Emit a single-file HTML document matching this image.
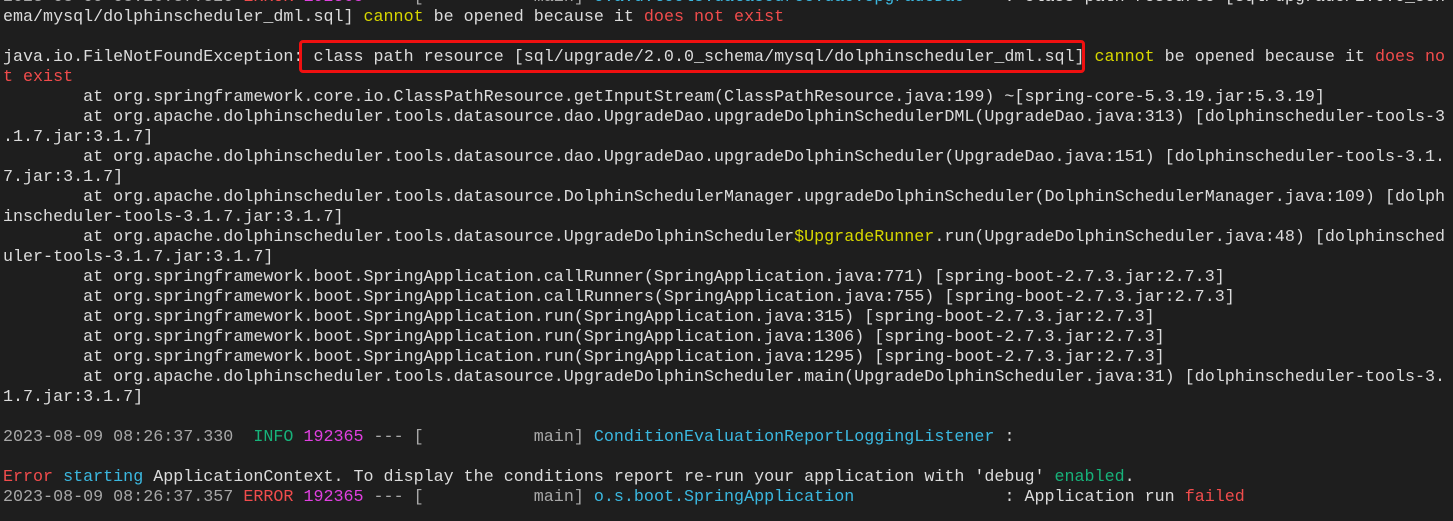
<!DOCTYPE html>
<html><head><meta charset="utf-8"><style>
html,body{margin:0;padding:0;background:#1e1e1e;width:1453px;height:521px;overflow:hidden}
#t{position:absolute;left:3px;top:-12px;font-family:"Liberation Mono",monospace;font-size:16.7px;color:#dcdcdc}
#t div{height:20px;line-height:20px;white-space:pre}
.g{color:#a8a8a8}.r{color:#f14c4c}.y{color:#d7d700}.m{color:#e040e0}.c{color:#3bb8e0}.gr{color:#17b27a}
#box{position:absolute;left:299px;top:40px;width:780px;height:27px;border:3px solid #f01010;border-radius:4px}
</style></head><body>
<div id="t">
<div><span class="g">2023-08-09 08:26:37.320 </span><span class="r">ERROR</span> <span class="m">192365</span><span class="g"> --- [           main] </span><span class="c">o.a.d.tools.datasource.dao.UpgradeDao</span>    : class path resource [sql/upgrade/2.0.0_sch</div>
<div>ema/mysql/dolphinscheduler_dml.sql] <span class="y">cannot</span> be opened because it <span class="r">does not exist</span></div>
<div> </div>
<div>java.io.FileNotFoundException: class path resource [sql/upgrade/2.0.0_schema/mysql/dolphinscheduler_dml.sql] <span class="y">cannot</span> be opened because it <span class="r">does no</span></div>
<div><span class="r">t exist</span></div>
<div>        at org.springframework.core.io.ClassPathResource.getInputStream(ClassPathResource.java:199) ~[spring-core-5.3.19.jar:5.3.19]</div>
<div>        at org.apache.dolphinscheduler.tools.datasource.dao.UpgradeDao.upgradeDolphinSchedulerDML(UpgradeDao.java:313) [dolphinscheduler-tools-3</div>
<div>.1.7.jar:3.1.7]</div>
<div>        at org.apache.dolphinscheduler.tools.datasource.dao.UpgradeDao.upgradeDolphinScheduler(UpgradeDao.java:151) [dolphinscheduler-tools-3.1.</div>
<div>7.jar:3.1.7]</div>
<div>        at org.apache.dolphinscheduler.tools.datasource.DolphinSchedulerManager.upgradeDolphinScheduler(DolphinSchedulerManager.java:109) [dolph</div>
<div>inscheduler-tools-3.1.7.jar:3.1.7]</div>
<div>        at org.apache.dolphinscheduler.tools.datasource.UpgradeDolphinScheduler<span class="y">$UpgradeRunner</span>.run(UpgradeDolphinScheduler.java:48) [dolphinsched</div>
<div>uler-tools-3.1.7.jar:3.1.7]</div>
<div>        at org.springframework.boot.SpringApplication.callRunner(SpringApplication.java:771) [spring-boot-2.7.3.jar:2.7.3]</div>
<div>        at org.springframework.boot.SpringApplication.callRunners(SpringApplication.java:755) [spring-boot-2.7.3.jar:2.7.3]</div>
<div>        at org.springframework.boot.SpringApplication.run(SpringApplication.java:315) [spring-boot-2.7.3.jar:2.7.3]</div>
<div>        at org.springframework.boot.SpringApplication.run(SpringApplication.java:1306) [spring-boot-2.7.3.jar:2.7.3]</div>
<div>        at org.springframework.boot.SpringApplication.run(SpringApplication.java:1295) [spring-boot-2.7.3.jar:2.7.3]</div>
<div>        at org.apache.dolphinscheduler.tools.datasource.UpgradeDolphinScheduler.main(UpgradeDolphinScheduler.java:31) [dolphinscheduler-tools-3.</div>
<div>1.7.jar:3.1.7]</div>
<div> </div>
<div><span class="g">2023-08-09 08:26:37.330  </span><span class="gr">INFO</span> <span class="m">192365</span><span class="g"> --- [           main] </span><span class="c">ConditionEvaluationReportLoggingListener</span> :</div>
<div> </div>
<div><span class="r">Error</span> <span class="c">starting</span> ApplicationContext. To display the conditions report re-run your application with 'debug' <span class="gr">enabled</span>.</div>
<div><span class="g">2023-08-09 08:26:37.357 </span><span class="r">ERROR</span> <span class="m">192365</span><span class="g"> --- [           main] </span><span class="c">o.s.boot.SpringApplication</span>               : Application run <span class="r">failed</span></div>
</div>
<div id="box"></div>
</body></html>
